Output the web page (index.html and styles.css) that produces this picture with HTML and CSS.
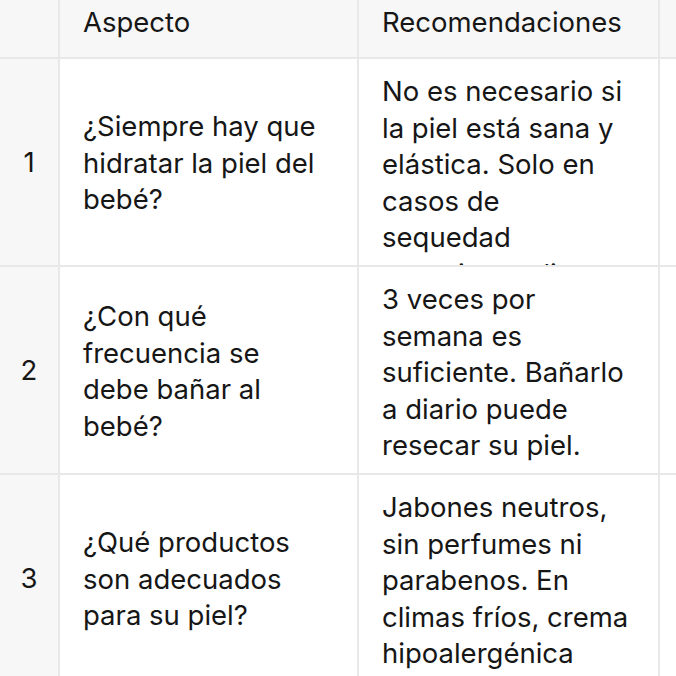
FILE: index.html
```html
<!DOCTYPE html>
<html lang="es">
<head>
<meta charset="utf-8">
<link rel="stylesheet" href="styles.css">
</head>
<body>
<div class="table">
  <div class="cell head idx"></div>
  <div class="cell head"><span>Aspecto</span></div>
  <div class="cell head"><span>Recomendaciones</span></div>
  <div class="cell head"></div>

  <div class="cell idx"><p>1</p></div>
  <div class="cell"><p>¿Siempre hay que hidratar la piel del bebé?</p></div>
  <div class="cell"><p>No es necesario si la piel está sana y elástica. Solo en casos de sequedad excesiva, aplicar crema.</p></div>
  <div class="cell"></div>

  <div class="cell idx"><p>2</p></div>
  <div class="cell"><p>¿Con qué frecuencia se debe bañar al bebé?</p></div>
  <div class="cell"><p>3 veces por semana es suficiente. Bañarlo a diario puede resecar su piel.</p></div>
  <div class="cell"></div>

  <div class="cell idx"><p>3</p></div>
  <div class="cell"><p>¿Qué productos son adecuados para su piel?</p></div>
  <div class="cell"><p>Jabones neutros, sin perfumes ni parabenos. En climas fríos, crema hipoalergénica</p></div>
  <div class="cell"></div>
</div>
</body>
</html>
```

FILE: styles.css
```css
html, body {
  margin: 0;
  padding: 0;
  background: #ffffff;
}

body {
  font-family: Inter, "Noto Sans", sans-serif;
  font-size: 27.5px;
  line-height: 36.5px;
  color: #161616;
}

.table {
  display: grid;
  grid-template-columns: 58px 297px 299px 40px;
  grid-template-rows: 57px 206px 206px 206px;
  gap: 2px;
  background: #e8e8e8;
  width: 702px;
}

.cell {
  background: #ffffff;
  padding: 14px 25px 12px 23px;
  overflow: hidden;
  display: flex;
  flex-direction: column;
  box-sizing: border-box;
}

.cell p {
  margin: auto 0;
}

.head {
  background: #f7f7f7;
  padding: 4px 25px 0 23px;
}

.idx {
  background: #f7f7f7;
  padding: 12px 0;
  align-items: center;
  text-align: center;
}
```
